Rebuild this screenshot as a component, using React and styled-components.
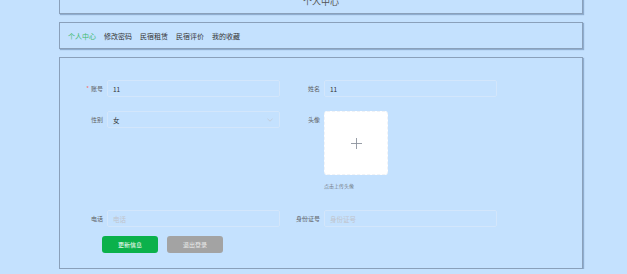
import React from 'react';
import styled, { createGlobalStyle } from 'styled-components';

const GlobalStyle = createGlobalStyle`
  html, body {
    margin: 0;
    padding: 0;
    background: #c4e1fe;
    font-family: "Noto Sans CJK SC", "Noto Sans", sans-serif;
    overflow: hidden;
  }
`;

const Page = styled.div`
  width: 524px;
  margin: -16px 0 0 59px;
  display: flex;
  flex-direction: column;
  gap: 8px;
`;

const Panel = styled.div`
  border: 1px solid #8aa0ba;
  box-shadow: 1px 1px 1px rgba(80, 110, 150, 0.45);
  box-sizing: border-box;
`;

const TitleBar = styled(Panel)`
  padding: 10px 0 4px;
  text-align: center;
  font-size: 9px;
  line-height: 14px;
  color: #555;
`;

const Nav = styled(Panel)`
  height: 27px;
  display: flex;
  align-items: center;
  gap: 8px;
  padding: 0 8px;
`;

const NavItem = styled.span`
  font-size: 7px;
  line-height: 10px;
  color: ${props => (props.active ? '#3fba6f' : '#333')};
  cursor: pointer;
`;

const FormPanel = styled(Panel)`
  height: 212px;
  padding: 22px 0 0 13px;
`;

const Grid = styled.div`
  display: grid;
  grid-template-columns: 217px 217px;
  row-gap: 14px;
`;

const Field = styled.div`
  display: flex;
  align-items: flex-start;
`;

const Label = styled.label`
  width: 30px;
  margin-right: 4px;
  flex-shrink: 0;
  text-align: right;
  font-size: 6px;
  line-height: 17px;
  color: #606266;
  white-space: nowrap;
`;

const Star = styled.span`
  color: #f56c6c;
  margin-right: 2px;
`;

const InputBox = styled.div`
  position: relative;
  width: 173px;
  height: 17px;
  box-sizing: border-box;
  border: 1px solid #d3e6fb;
  border-radius: 2px;
  padding: 0 5px;
  display: flex;
  align-items: center;
  font-size: 6.5px;
  color: ${props => (props.placeholder ? '#c0c4cc' : '#303133')};
`;

const Chevron = styled.svg`
  position: absolute;
  right: 6px;
  top: 6px;
  width: 6px;
  height: 4px;
`;

const UploadCol = styled.div`
  display: flex;
  flex-direction: column;
`;

const Uploader = styled.div`
  width: 64px;
  height: 64px;
  box-sizing: border-box;
  background: #fff;
  border: 1px dashed #f0f2f6;
  border-radius: 3px;
  display: flex;
  align-items: center;
  justify-content: center;
`;

const Tip = styled.div`
  margin-top: 7px;
  font-size: 5px;
  line-height: 8px;
  color: #727a85;
  padding-bottom: 6px;
`;

const Actions = styled.div`
  display: flex;
  gap: 9px;
  margin: 9px 0 0 29px;
`;

const Button = styled.button`
  width: 56px;
  height: 17px;
  border: none;
  border-radius: 3px;
  font-family: inherit;
  font-size: 6px;
  padding: 0;
  color: ${props => (props.gray ? '#eaeaea' : '#fff')};
  background: ${props => (props.gray ? '#a3a3a3' : '#0bb14b')};
`;

const navItems = ['个人中心', '修改密码', '民宿租赁', '民宿评价', '我的收藏'];

const App = () => (
  <>
    <GlobalStyle />
    <Page>
      <TitleBar>个人中心</TitleBar>
      <Nav>
        {navItems.map((item, i) => (
          <NavItem key={item} active={i === 0}>{item}</NavItem>
        ))}
      </Nav>
      <FormPanel>
        <Grid>
          <Field>
            <Label><Star>*</Star>账号</Label>
            <InputBox>11</InputBox>
          </Field>
          <Field>
            <Label>姓名</Label>
            <InputBox>11</InputBox>
          </Field>
          <Field>
            <Label>性别</Label>
            <InputBox>
              女
              <Chevron viewBox="0 0 6 4">
                <path d="M0.5 0.8 L3 3.2 L5.5 0.8" fill="none" stroke="#c0c4cc" strokeWidth="0.7" />
              </Chevron>
            </InputBox>
          </Field>
          <Field>
            <Label>头像</Label>
            <UploadCol>
              <Uploader>
                <svg width="11" height="11" viewBox="0 0 11 11">
                  <path d="M5.5 0 V11 M0 5.5 H11" stroke="#8c939d" strokeWidth="0.9" />
                </svg>
              </Uploader>
              <Tip>点击上传头像</Tip>
            </UploadCol>
          </Field>
          <Field>
            <Label>电话</Label>
            <InputBox placeholder="true">电话</InputBox>
          </Field>
          <Field>
            <Label>身份证号</Label>
            <InputBox placeholder="true">身份证号</InputBox>
          </Field>
        </Grid>
        <Actions>
          <Button>更新信息</Button>
          <Button gray>退出登录</Button>
        </Actions>
      </FormPanel>
    </Page>
  </>
);

export default App;
